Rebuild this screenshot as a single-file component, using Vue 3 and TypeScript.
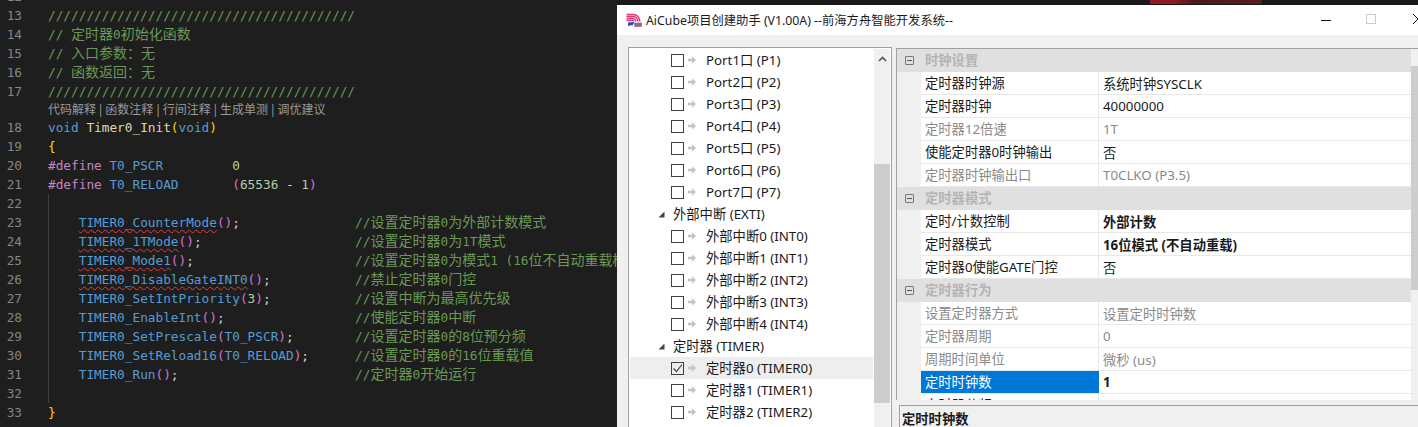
<script setup lang="ts">
interface Seg { t: string; c: string }
interface Line { n: number; segs: Seg[]; guide?: boolean; lens?: boolean }

const split = (t: string, c: string): Seg[] =>
  t.split(/([\u3000-\u9fff\uff00-\uffef]+)/).filter(Boolean).map((s) => ({
    t: s,
    c: /[\u3000-\u9fff\uff00-\uffef]/.test(s) ? `${c} zh` : c,
  }));

const call = (name: string, arg: Seg[], tail: number, comment: string, err = false): Seg[] => [
  { t: '    ', c: '' },
  { t: name, c: err ? 'mac err' : 'mac' },
  { t: '(', c: 'pp' },
  ...arg,
  { t: ')', c: 'pp' },
  { t: ';' + ' '.repeat(tail), c: 'txt' },
  ...split(comment, 'com'),
];

const slashes = '/'.repeat(40);
const lines: Line[] = [
  { n: 12, segs: [] },
  { n: 13, segs: [{ t: slashes, c: 'com' }] },
  { n: 14, segs: split('// 定时器0初始化函数', 'com') },
  { n: 15, segs: split('// 入口参数：无', 'com') },
  { n: 16, segs: split('// 函数返回：无', 'com') },
  { n: 17, segs: [{ t: slashes, c: 'com' }] },
  { n: 0, lens: true, segs: [] },
  { n: 18, segs: [{ t: 'void', c: 'kw' }, { t: ' ', c: '' }, { t: 'Timer0_Init', c: 'fn' }, { t: '(', c: 'py' }, { t: 'void', c: 'kw' }, { t: ')', c: 'py' }] },
  { n: 19, segs: [{ t: '{', c: 'py' }] },
  { n: 20, segs: [{ t: '#define', c: 'pre' }, { t: ' ', c: '' }, { t: 'T0_PSCR', c: 'kw' }, { t: '         ', c: '' }, { t: '0', c: 'num' }] },
  { n: 21, segs: [{ t: '#define', c: 'pre' }, { t: ' ', c: '' }, { t: 'T0_RELOAD', c: 'kw' }, { t: '       ', c: '' }, { t: '(', c: 'pp' }, { t: '65536', c: 'num' }, { t: ' - ', c: 'txt' }, { t: '1', c: 'num' }, { t: ')', c: 'pp' }] },
  { n: 22, guide: true, segs: [] },
  { n: 23, guide: true, segs: call('TIMER0_CounterMode', [], 15, '//设置定时器0为外部计数模式', true) },
  { n: 24, guide: true, segs: call('TIMER0_1TMode', [], 20, '//设置定时器0为1T模式', true) },
  { n: 25, guide: true, segs: call('TIMER0_Mode1', [], 21, '//设置定时器0为模式1 (16位不自动重载模式)', true) },
  { n: 26, guide: true, segs: call('TIMER0_DisableGateINT0', [], 11, '//禁止定时器0门控', true) },
  { n: 27, guide: true, segs: call('TIMER0_SetIntPriority', [{ t: '3', c: 'num' }], 11, '//设置中断为最高优先级') },
  { n: 28, guide: true, segs: call('TIMER0_EnableInt', [], 17, '//使能定时器0中断') },
  { n: 29, guide: true, segs: call('TIMER0_SetPrescale', [{ t: 'T0_PSCR', c: 'kw' }], 8, '//设置定时器0的8位预分频') },
  { n: 30, guide: true, segs: call('TIMER0_SetReload16', [{ t: 'T0_RELOAD', c: 'kw' }], 6, '//设置定时器0的16位重载值') },
  { n: 31, guide: true, segs: call('TIMER0_Run', [], 23, '//定时器0开始运行') },
  { n: 32, guide: true, segs: [] },
  { n: 33, segs: [{ t: '}', c: 'py' }] },
  { n: 34, segs: [] },
];

interface TreeRow { label: string; group?: boolean; checked?: boolean; active?: boolean }
const tree: TreeRow[] = [
  ...[1, 2, 3, 4, 5, 6, 7].map((i) => ({ label: `Port${i}口 (P${i})` })),
  { label: '外部中断 (EXTI)', group: true },
  ...[0, 1, 2, 3, 4].map((i) => ({ label: `外部中断${i} (INT${i})` })),
  { label: '定时器 (TIMER)', group: true },
  { label: '定时器0 (TIMER0)', checked: true, active: true },
  { label: '定时器1 (TIMER1)' },
  { label: '定时器2 (TIMER2)' },
  { label: '定时器3 (TIMER3)' },
];

interface Prop { k: string; v?: string; group?: boolean; off?: boolean; bold?: boolean; sel?: boolean }
const props: Prop[] = [
  { k: '时钟设置', group: true },
  { k: '定时器时钟源', v: '系统时钟SYSCLK' },
  { k: '定时器时钟', v: '40000000' },
  { k: '定时器12倍速', v: '1T', off: true },
  { k: '使能定时器0时钟输出', v: '否' },
  { k: '定时器时钟输出口', v: 'T0CLKO (P3.5)', off: true },
  { k: '定时器模式', group: true },
  { k: '定时/计数控制', v: '外部计数', bold: true },
  { k: '定时器模式', v: '16位模式 (不自动重载)', bold: true },
  { k: '定时器0使能GATE门控', v: '否' },
  { k: '定时器行为', group: true },
  { k: '设置定时器方式', v: '设置定时时钟数', off: true },
  { k: '定时器周期', v: '0', off: true },
  { k: '周期时间单位', v: '微秒 (us)', off: true },
  { k: '定时时钟数', v: '1', bold: true, sel: true },
  { k: '定时器分频', v: '' },
];
</script>

<template>
  <div class="page">
    <section class="editor">
      <div v-for="(l, i) in lines" :key="i" :class="['line', { guide: l.guide, lens: l.lens }]">
        <template v-if="l.lens">代码解释 | 函数注释 | 行间注释 | 生成单测 | 调优建议</template>
        <template v-else>
          <span class="num-col">{{ l.n }}</span>
          <span class="code"><span v-for="(s, j) in l.segs" :key="j" :class="s.c">{{ s.t }}</span></span>
        </template>
      </div>
    </section>

    <section class="right">
      <div class="strip"><span class="glow"></span></div>
      <div class="window">
        <header class="titlebar">
          <svg class="logo" width="16" height="14" viewBox="0 0 16 14">
            <path d="M0.5 1.5H7Q13 1.5 14 8.5M0.5 3.5H6.5Q11.5 3.5 12 8.5M0.5 5.5H6Q9.5 5.5 10 8.5M0.5 7.5H6Q7.5 7.5 8 8.5" fill="none" stroke="#e0387a" stroke-width="1.4" />
            <path d="M3 13V10H8M2 11.5H7" fill="none" stroke="#1c4fc4" stroke-width="1.5" />
            <path d="M9 9.5V13.5M11 9.5V13.5M13 9.5V13.5M15 9.5V13.5M8.5 11H15.5M8.5 13H15.5" fill="none" stroke="#70205a" stroke-width="0.9" />
          </svg>
          <span class="title">AiCube项目创建助手 (V1.00A) --前海方舟智能开发系统--</span>
          <span class="caps">
            <i class="min"></i>
            <i class="max"></i>
            <svg class="close" width="12" height="12" viewBox="0 0 12 12"><path d="M1 1L6 6L1 11" fill="none" stroke="#111" stroke-width="1" /></svg>
          </span>
        </header>
        <div class="body">
          <div class="tree">
            <div class="tree-list">
              <div v-for="r in tree" :key="r.label" :class="['tree-row', { group: r.group, active: r.active }]">
                <template v-if="r.group">
                  <svg class="tri" width="7" height="7" viewBox="0 0 7 7"><path d="M6.5 0.5V6.5H0.5Z" fill="#444" /></svg>
                </template>
                <template v-else>
                  <span class="check">
                    <svg v-if="r.checked" width="11" height="11" viewBox="0 0 11 11"><path d="M1.5 5.5L4.5 8.5L10 1.5" fill="none" stroke="#444" stroke-width="1.2" /></svg>
                  </span>
                  <svg class="arrow" width="8" height="8" viewBox="0 0 8 8"><path d="M0 2.7H4V0.3L8 4L4 7.7V5.3H0Z" fill="#c4c4c4" /></svg>
                </template>
                <span class="tree-label">{{ r.label }}</span>
              </div>
            </div>
            <div class="tree-scroll">
              <svg class="up" width="9" height="6" viewBox="0 0 9 6"><path d="M1 5L4.5 1.5L8 5" fill="none" stroke="#555" stroke-width="1.6" /></svg>
              <div class="tree-thumb"></div>
            </div>
          </div>
          <div class="side">
            <div class="grid">
              <div class="grid-list">
                <div v-for="(p, i) in props" :key="i" :class="['prow', { group: p.group, off: p.off, sel: p.sel }]">
                  <template v-if="p.group">
                    <span class="gutter"><i class="minus"></i></span>
                    <span class="gname">{{ p.k }}</span>
                  </template>
                  <template v-else>
                    <span class="gutter"></span>
                    <span class="pk">{{ p.k }}</span>
                    <span :class="['pv', { b: p.bold }]">{{ p.v }}</span>
                  </template>
                </div>
              </div>
              <div class="grid-scroll">
                <div class="grid-thumb"></div>
              </div>
            </div>
            <div class="desc">定时时钟数</div>
          </div>
        </div>
      </div>
    </section>
  </div>
</template>

<style scoped>
.page {
  display: flex;
  width: 1418px;
  height: 427px;
  overflow: hidden;
  background: #1e1e1e;
}
.editor {
  width: 617px;
  flex: none;
  margin-top: -13.5px;
  overflow: hidden;
  font-family: "DejaVu Sans Mono", "Noto Sans CJK SC", monospace;
  font-size: 12.75px;
  color: #d4d4d4;
}
.line {
  display: flex;
  height: 19px;
  line-height: 19px;
  white-space: pre;
}
.line.guide {
  background: linear-gradient(#404040, #404040) 48px 0 / 1px 100% no-repeat;
}
.line.lens {
  height: 17px;
  line-height: 17px;
  padding-left: 48px;
  font-family: "Noto Sans", "Noto Sans CJK SC", sans-serif;
  font-size: 12px;
  word-spacing: -1.75px;
  color: #999;
}
.num-col {
  width: 22px;
  margin-right: 26px;
  flex: none;
  text-align: right;
  color: #858585;
}
.code { flex: none; }
.com { color: #6a9955; }
.zh { font-family: "Noto Sans CJK SC", sans-serif; font-size: 14px; line-height: 0; }
.kw { color: #569cd6; }
.mac { color: #569cd6; }
.fn { color: #dcdcaa; }
.pre { color: #c586c0; }
.num { color: #b5cea8; }
.py { color: #ffd700; }
.pp { color: #da70d6; }
.txt { color: #d4d4d4; }
.err {
  text-decoration: underline wavy #e03c3c 1px;
  text-underline-offset: 2px;
}

.right {
  flex: 1;
  min-width: 0;
  display: flex;
  flex-direction: column;
}
.strip {
  height: 5px;
  flex: none;
  padding-left: 533px;
  background: #191919;
}
.glow {
  display: block;
  width: 112px;
  height: 4px;
  background: linear-gradient(90deg, #8f1a22 0 22%, #4a1a1c 40%, #5a1c20 100%);
}
.window {
  flex: 1;
  display: flex;
  flex-direction: column;
  min-height: 0;
  background: #f0f0f0;
  font-family: "Noto Sans", "Noto Sans CJK SC", sans-serif;
  font-size: 13.3px;
  color: #1a1a1a;
}
.titlebar {
  height: 30px;
  flex: none;
  display: flex;
  align-items: center;
  background: #fff;
  padding-left: 9px;
}
.logo { flex: none; margin-right: 4px; }
.title { font-size: 12.3px; white-space: nowrap; }
.caps {
  margin-left: auto;
  display: flex;
  align-items: center;
}
.min { display: block; width: 10px; height: 1px; background: #111; margin-right: 35px; }
.max { display: block; width: 10px; height: 10px; border: 1px solid #ccc; margin-right: 36px; margin-top: -3px; box-sizing: border-box; }
.close { display: block; margin-right: -6px; margin-top: -2px; }

.body {
  flex: 1;
  min-height: 0;
  display: flex;
  padding: 12px 0 0 11px;
  gap: 4px;
}
.tree {
  width: 264px;
  flex: none;
  display: flex;
  box-sizing: border-box;
  height: 400px;
  border: 1px solid #a0a0a0;
  background: #fff;
}
.tree-list {
  flex: 1;
  padding: 1px 1px 0;
  overflow: hidden;
}
.tree-row {
  height: 22px;
  display: flex;
  align-items: center;
  padding-left: 41px;
  white-space: nowrap;
}
.tree-row.group { padding-left: 28px; }
.tree-row.active { background: #eeeeee; }
.tree-label { margin-top: -2px; }
.check {
  width: 13px;
  height: 13px;
  flex: none;
  box-sizing: border-box;
  border: 1px solid #404040;
  background: #fff;
  display: flex;
  align-items: center;
  justify-content: center;
}
.active .check { background: #eee; }
.arrow { flex: none; margin: 0 10px 0 4px; }
.tri { flex: none; margin-right: 8px; }
.tree-scroll {
  width: 16px;
  flex: none;
  margin: 1px 1px 0 0;
  background: #f0f0f0;
  position: relative;
}
.up { position: absolute; left: 3.5px; top: 7px; }
.tree-thumb {
  margin-top: 115px;
  height: 239px;
  background: #cdcdcd;
}

.side {
  flex: 1;
  min-width: 0;
  display: flex;
  flex-direction: column;
}
.grid {
  height: 352px;
  flex: none;
  display: flex;
  box-sizing: border-box;
  border-top: 1px solid #a0a0a0;
  border-left: 1px solid #a0a0a0;
  background: #f0f0f0;
  margin-top: 1px;
}
.grid-list {
  flex: 1;
  min-width: 0;
  overflow: hidden;
}
.prow {
  height: 23px;
  box-sizing: border-box;
  display: flex;
  align-items: center;
  background: #fff;
  border-bottom: 1px solid #e8e8e8;
  white-space: nowrap;
}
.prow.group { background: #e0e0e0; border-bottom: 0; }
.gutter {
  width: 24px;
  flex: none;
  align-self: stretch;
  background: #f0f0f0;
  display: flex;
  align-items: center;
  justify-content: center;
  margin-bottom: -1px;
}
.group .gutter { background: #e0e0e0; margin-bottom: 0; }
.minus {
  display: block;
  width: 9px;
  height: 9px;
  box-sizing: border-box;
  border: 1px solid #777;
  background: linear-gradient(#555, #555) center / 5px 1px no-repeat;
  border-radius: 1px;
}
.gname { padding-left: 4px; margin-top: -2px; color: #b4b4b4; font-weight: 700; }
.pk {
  width: 178px;
  flex: none;
  box-sizing: border-box;
  padding-left: 4px;
  align-self: stretch;
  line-height: 22px;
  border-right: 1px solid #e8e8e8;
}
.pv { padding-left: 4px; }
.pv.b { font-weight: 700; }
.off .pk, .off .pv { color: #8a8a8a; }
.sel .pk { background: #0078d7; color: #fff; border-right: 0; }
.grid-scroll {
  width: 7px;
  flex: none;
  background: #f0f0f0;
  padding-top: 17px;
}
.grid-thumb { height: 224px; background: #cdcdcd; }
.desc {
  flex: 1;
  margin: 5px 0 0 3px;
  box-sizing: border-box;
  border-top: 1px solid #a0a0a0;
  border-left: 1px solid #a0a0a0;
  padding: 3px 0 0 2px;
  font-weight: 700;
  line-height: 20px;
  color: #1a1a1a;
}
</style>
